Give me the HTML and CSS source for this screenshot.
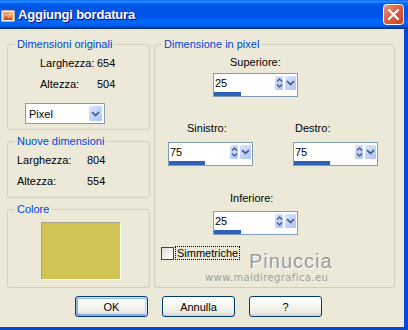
FILE: index.html
```html
<!DOCTYPE html>
<html lang="it">
<head>
<meta charset="utf-8">
<title>Aggiungi bordatura</title>
<link rel="stylesheet" href="styles.css">
</head>
<body>
<div class="window">
  <div class="titlebar">
    <svg class="app-icon" width="15" height="15" viewBox="0 0 15 15">
      <rect x="0.5" y="2.5" width="13" height="11" rx="1" fill="#F4F1E8" stroke="#B9B2A2"/>
      <rect x="2" y="4" width="10" height="8" fill="#F0A070"/>
      <path d="M2 12 5 7.5 7.5 10.5 9.5 8.5 12 12Z" fill="#D8502A"/>
      <circle cx="9.5" cy="6" r="1.2" fill="#FFE08A"/>
    </svg>
    <span class="title">Aggiungi bordatura</span>
    <svg class="close" width="21" height="21" viewBox="0 0 21 21">
      <defs>
        <linearGradient id="closeg" x1="0" y1="0" x2="1" y2="1">
          <stop offset="0" stop-color="#F09A7E"/>
          <stop offset="0.45" stop-color="#E2603E"/>
          <stop offset="1" stop-color="#C8401E"/>
        </linearGradient>
      </defs>
      <rect x="0.5" y="0.5" width="20" height="20" rx="3" fill="url(#closeg)" stroke="#FFFFFF"/>
      <path d="M6 6 15 15M15 6 6 15" stroke="#FFFFFF" stroke-width="2.2" stroke-linecap="round"/>
    </svg>
  </div>
  <div class="frame">
    <div class="columns">
      <div class="left">
        <fieldset class="group g-orig">
          <legend>Dimensioni originali</legend>
          <div class="kv kv-orig">
            <span>Larghezza:</span><span>654</span>
            <span>Altezza:</span><span>504</span>
          </div>
          <div class="select">
            <span class="select-text">Pixel</span>
            <span class="sbtn drop">
              <svg width="9" height="6" viewBox="0 0 9 6"><path d="M1 1.2 4.5 4.5 8 1.2" fill="none" stroke="#4D6185" stroke-width="1.8"/></svg>
            </span>
          </div>
        </fieldset>
        <fieldset class="group g-new">
          <legend>Nuove dimensioni</legend>
          <div class="kv kv-new">
            <span>Larghezza:</span><span>804</span>
            <span>Altezza:</span><span>554</span>
          </div>
        </fieldset>
        <fieldset class="group g-color">
          <legend>Colore</legend>
          <div class="swatch"></div>
        </fieldset>
      </div>
      <fieldset class="group g-pixel">
        <legend>Dimensione in pixel</legend>
        <div class="edge edge-top">
          <div class="elabel">Superiore:</div>
          <div class="spin">
            <span class="val">25</span>
            <span class="sbtn ud">
              <svg width="7" height="12" viewBox="0 0 7 12"><path d="M1 4.5 3.5 2 6 4.5M1 7.5 3.5 10 6 7.5" fill="none" stroke="#4D6185" stroke-width="1.5"/></svg>
            </span>
            <span class="sbtn drop">
              <svg width="9" height="6" viewBox="0 0 9 6"><path d="M1 1.2 4.5 4.5 8 1.2" fill="none" stroke="#4D6185" stroke-width="1.8"/></svg>
            </span>
            <span class="bar" style="width:27px"></span>
          </div>
        </div>
        <div class="sides">
          <div class="edge edge-left">
            <div class="elabel">Sinistro:</div>
            <div class="spin">
              <span class="val">75</span>
              <span class="sbtn ud">
                <svg width="7" height="12" viewBox="0 0 7 12"><path d="M1 4.5 3.5 2 6 4.5M1 7.5 3.5 10 6 7.5" fill="none" stroke="#4D6185" stroke-width="1.5"/></svg>
              </span>
              <span class="sbtn drop">
                <svg width="9" height="6" viewBox="0 0 9 6"><path d="M1 1.2 4.5 4.5 8 1.2" fill="none" stroke="#4D6185" stroke-width="1.8"/></svg>
              </span>
              <span class="bar" style="width:36px"></span>
            </div>
          </div>
          <div class="edge edge-right">
            <div class="elabel">Destro:</div>
            <div class="spin">
              <span class="val">75</span>
              <span class="sbtn ud">
                <svg width="7" height="12" viewBox="0 0 7 12"><path d="M1 4.5 3.5 2 6 4.5M1 7.5 3.5 10 6 7.5" fill="none" stroke="#4D6185" stroke-width="1.5"/></svg>
              </span>
              <span class="sbtn drop">
                <svg width="9" height="6" viewBox="0 0 9 6"><path d="M1 1.2 4.5 4.5 8 1.2" fill="none" stroke="#4D6185" stroke-width="1.8"/></svg>
              </span>
              <span class="bar" style="width:36px"></span>
            </div>
          </div>
        </div>
        <div class="edge edge-bottom">
          <div class="elabel">Inferiore:</div>
          <div class="spin">
            <span class="val">25</span>
            <span class="sbtn ud">
              <svg width="7" height="12" viewBox="0 0 7 12"><path d="M1 4.5 3.5 2 6 4.5M1 7.5 3.5 10 6 7.5" fill="none" stroke="#4D6185" stroke-width="1.5"/></svg>
            </span>
            <span class="sbtn drop">
              <svg width="9" height="6" viewBox="0 0 9 6"><path d="M1 1.2 4.5 4.5 8 1.2" fill="none" stroke="#4D6185" stroke-width="1.8"/></svg>
            </span>
            <span class="bar" style="width:27px"></span>
          </div>
        </div>
        <div class="check">
          <span class="checkbox"></span>
          <span class="check-text">Simmetriche</span>
        </div>
      </fieldset>
    </div>
    <div class="buttons">
      <button class="btn btn-default">OK</button>
      <button class="btn">Annulla</button>
      <button class="btn">?</button>
    </div>
  </div>
  <div class="watermark">
    <div class="wm-name">Pinuccia</div>
    <div class="wm-url">www.maidiregrafica.eu</div>
  </div>
</div>
</body>
</html>
```
FILE: styles.css
```css
html, body {
  margin: 0;
  padding: 0;
}

body {
  width: 408px;
  height: 330px;
  overflow: hidden;
  background: #ECE9D8;
  font-family: "Liberation Sans", Arial, sans-serif;
  font-size: 11px;
  color: #000;
}

.window {
  position: relative;
  width: 408px;
  height: 330px;
  display: flex;
  flex-direction: column;
}

/* ---------- title bar ---------- */
.titlebar {
  height: 29px;
  flex: none;
  display: flex;
  align-items: center;
  padding: 0 4px 0 1px;
  background: linear-gradient(to bottom,
    #0058EE 0%, #3593FF 4%, #288EFF 6%, #127DFF 8%, #036FFC 10%,
    #0262EE 14%, #0057E5 20%, #0054E3 24%, #0055EB 56%, #005BF5 66%,
    #026AFE 76%, #0062EF 86%, #0052D6 92%, #0040AB 94%, #003092 100%);
}

.app-icon {
  flex: none;
  margin-top: 1px;
}

.title {
  margin-left: 2px;
  color: #FFFFFF;
  font-weight: bold;
  font-size: 13px;
  letter-spacing: -0.2px;
  text-shadow: 1px 1px 0 #0F1089;
}

.close {
  margin-left: auto;
  flex: none;
}

/* ---------- frame ---------- */
.frame {
  flex: 1;
  border-right: 4px solid #0A46D4;
  border-bottom: 3px solid #0A46D4;
  padding: 9px 9px 0 7px;
}

.columns {
  display: grid;
  grid-template-columns: 143px 241px;
  column-gap: 4px;
}

.left {
  display: flex;
  flex-direction: column;
  gap: 5px;
}

fieldset.group {
  margin: 0;
  padding: 0;
  border: 1px solid #D0D0BF;
  border-radius: 3px;
  min-width: 0;
}

fieldset.group legend {
  margin-left: 7px;
  padding: 0 2px;
  color: #0046D5;
  line-height: 13px;
}

.g-orig {
  padding: 6px 0 5px !important;
}

.g-new {
  padding: 6px 0 9px !important;
}

.g-color {
  padding: 6px 0 7px !important;
}

.g-pixel {
  padding: 5px 0 0 !important;
}

.kv {
  display: grid;
  row-gap: 8px;
  line-height: 13px;
}

.kv-orig {
  grid-template-columns: 57px auto;
  margin-left: 32px;
}

.kv-new {
  grid-template-columns: 70px auto;
  margin-left: 9px;
}

/* ---------- combo ---------- */
.select {
  margin: 12px 0 0 17px;
  width: 80px;
  height: 21px;
  box-sizing: border-box;
  border: 1px solid #7F9DB9;
  background: #FFFFFF;
  display: flex;
  align-items: center;
}

.select-text {
  flex: 1;
  padding-left: 3px;
}

.select .drop {
  width: 15px;
  height: 17px;
  margin-right: 1px;
}

.sbtn {
  box-sizing: border-box;
  display: flex;
  align-items: center;
  justify-content: center;
  border: 1px solid #FFFFFF;
  border-radius: 2px;
  background: linear-gradient(135deg, #DCE6FE 0%, #C2D3FC 50%, #AFC4F4 100%);
}

/* ---------- swatch ---------- */
.swatch {
  margin-left: 33px;
  width: 80px;
  height: 58px;
  box-sizing: border-box;
  background: #D0C454;
  border: 1px solid;
  border-color: #A8A48C #FFFFF4 #FFFFF4 #A8A48C;
}

/* ---------- right pane ---------- */
.edge {
  width: 85px;
}

.elabel {
  line-height: 13px;
  white-space: nowrap;
}

.edge-top {
  margin-left: 58px;
}

.edge-top .elabel {
  padding-left: 17px;
  margin-bottom: 4px;
}

.sides {
  display: flex;
  gap: 40px;
  margin: 25px 0 0 13px;
}

.edge-left .elabel {
  padding-left: 19px;
  margin-bottom: 7px;
}

.edge-right .elabel {
  padding-left: 2px;
  margin-bottom: 7px;
}

.edge-bottom {
  margin: 26px 0 0 58px;
}

.edge-bottom .elabel {
  padding-left: 17px;
  margin-bottom: 6px;
}

.spin {
  height: 24px;
  box-sizing: border-box;
  border: 1px solid #7F9DB9;
  background: #FFFFFF;
  display: grid;
  grid-template-columns: 1fr 10px 13px;
  grid-template-rows: 18px 4px;
}

.spin .val {
  padding-left: 1px;
  line-height: 18px;
}

.spin .ud,
.spin .drop {
  margin: 1px 0;
}

.spin .drop {
  margin-right: 0;
}

.spin .bar {
  grid-column: 1 / -1;
  grid-row: 2;
  height: 4px;
  background: #3061B8;
}

.check {
  display: flex;
  align-items: center;
  margin: 11px 0 0 6px;
}

.checkbox {
  width: 13px;
  height: 13px;
  box-sizing: border-box;
  border: 1px solid #1C5180;
  background: linear-gradient(135deg, #DCDCD7 0%, #F4F4F0 60%, #FFFFFF 100%);
}

.check-text {
  margin-left: 1px;
  padding: 0 1px;
  line-height: 12px;
  border: 1px dotted #000;
}

/* ---------- buttons ---------- */
.buttons {
  display: flex;
  gap: 14px;
  margin: 8px 0 0 68px;
}

.btn {
  width: 73px;
  height: 21px;
  box-sizing: border-box;
  padding: 0;
  border: 1px solid #003C74;
  border-radius: 3px;
  background: linear-gradient(to bottom, #FFFFFF 0%, #F7F7F3 40%, #ECEBE6 80%, #D6D0C5 100%);
  font-family: "Liberation Sans", Arial, sans-serif;
  font-size: 11px;
  color: #000;
}

.btn-default {
  box-shadow: inset -1px 1px #CEE7FF, inset 1px 2px #98B8EA, inset -2px 2px #BCD4F6, inset 1px -1px #89ADE4, inset 2px -2px #89ADE4;
}

/* ---------- watermark ---------- */
.watermark {
  position: absolute;
  left: 205px;
  top: 251px;
  pointer-events: none;
}

.wm-name {
  padding-left: 44px;
  font-family: "Liberation Sans", Arial, sans-serif;
  font-size: 20px;
  line-height: 21px;
  letter-spacing: 1px;
  color: #9A9A9A;
  text-shadow: 1px 1px 0 #FFFFFF;
}

.wm-url {
  font-family: "DejaVu Sans", sans-serif;
  font-size: 10px;
  line-height: 12px;
  letter-spacing: 0.4px;
  color: #A0A0A0;
}
```
